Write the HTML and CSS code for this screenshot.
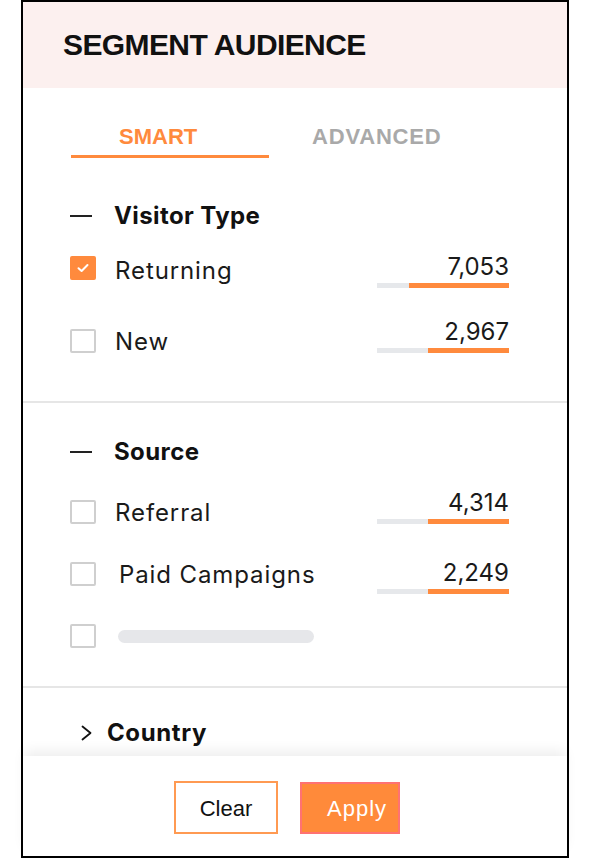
FILE: index.html
```html
<!DOCTYPE html>
<html lang="en">
<head>
<meta charset="utf-8">
<title>Segment Audience</title>
<link rel="stylesheet" href="styles.css">
</head>
<body>
<div class="panel">
  <div class="header"><h1 class="title">SEGMENT AUDIENCE</h1></div>

  <div class="tabs">
    <div class="tab active">SMART</div>
    <div class="tab plain">ADVANCED</div>
  </div>

  <section class="group group-visitor">
    <div class="group-head"><span class="dash"></span><span>Visitor Type</span></div>
    <div class="row">
      <span class="cb checked"><svg width="14" height="12" viewBox="0 0 14 12"><polyline points="2.5,6.2 5.6,9 11.5,3" fill="none" stroke="#fff" stroke-width="2" stroke-linecap="round" stroke-linejoin="round"/></svg></span>
      <span class="label label-low">Returning</span>
      <div class="stat"><div class="num">7,053</div><div class="bar"><span class="fill" style="width:76%"></span></div></div>
    </div>
    <div class="row">
      <span class="cb"></span>
      <span class="label">New</span>
      <div class="stat up"><div class="num">2,967</div><div class="bar"><span class="fill" style="width:61%"></span></div></div>
    </div>
  </section>

  <section class="group group-source">
    <div class="group-head"><span class="dash"></span><span>Source</span></div>
    <div class="row">
      <span class="cb"></span>
      <span class="label">Referral</span>
      <div class="stat up"><div class="num">4,314</div><div class="bar"><span class="fill" style="width:61%"></span></div></div>
    </div>
    <div class="row">
      <span class="cb"></span>
      <span class="label label-wide">Paid Campaigns</span>
      <div class="stat"><div class="num">2,249</div><div class="bar"><span class="fill" style="width:61%"></span></div></div>
    </div>
    <div class="row row-center">
      <span class="cb"></span>
      <span class="skeleton"></span>
    </div>
  </section>

  <div class="collapsed">
    <svg class="chev" width="13" height="16" viewBox="0 0 13 16"><polyline points="2.5,1.5 10.5,8 2.5,14.5" fill="none" stroke="#111" stroke-width="1.8" stroke-linecap="round" stroke-linejoin="round"/></svg>
    <span>Country</span>
  </div>

  <footer class="footer">
    <button class="btn btn-clear">Clear</button>
    <button class="btn btn-apply">Apply</button>
  </footer>
</div>
</body>
</html>
```

FILE: styles.css
```css
* { box-sizing: border-box; }

body {
  margin: 0;
  background: #fff;
  font-family: Inter, "Noto Sans", sans-serif;
  color: #1a1a1a;
}

.panel {
  margin-left: 21px;
  width: 548px;
  height: 858px;
  border: 2px solid #000;
  display: flex;
  flex-direction: column;
  background: #fff;
}

.header {
  height: 86px;
  flex: none;
  background: #fcf0ef;
  display: flex;
  align-items: center;
  padding-left: 40px;
}

.title {
  margin: 0;
  font: 700 30px/30px "Liberation Sans", Arial, sans-serif;
  letter-spacing: -0.6px;
  color: #111;
}

.tabs {
  display: flex;
  padding-left: 48px;
  flex: none;
}

.tab {
  font: 700 22px/22px "Liberation Sans", Arial, sans-serif;
  padding-top: 38px;
  padding-bottom: 7px;
  border-bottom: 3px solid transparent;
}

.tab.active {
  width: 198px;
  padding-left: 48px;
  color: #ff8a3d;
  border-bottom-color: #ff8a3d;
}

.tab.plain {
  margin-left: 43px;
  color: #a9a9a9;
  letter-spacing: 0.8px;
}

.group {
  flex: none;
  padding-left: 47px;
  padding-right: 58px;
  border-bottom: 2px solid #e6e6e6;
}

.group-visitor { padding-top: 46px; padding-bottom: 48px; }
.group-source { padding-top: 37px; padding-bottom: 38px; }

.group-head {
  display: flex;
  align-items: center;
  font: 700 24px/24px Inter, sans-serif;
  letter-spacing: 0.4px;
  color: #111;
}

.dash {
  width: 22px;
  height: 2px;
  background: #222;
  margin-right: 22px;
  margin-top: -1px;
}

.row {
  display: flex;
  align-items: flex-start;
  height: 24px;
}

.group-visitor .group-head + .row { margin-top: 28px; }
.group-visitor .row + .row { margin-top: 49px; }
.group-source .group-head + .row { margin-top: 36px; }
.group-source .row + .row { margin-top: 38px; }

.row-center { align-items: center; }

.cb {
  flex: none;
  width: 26px;
  height: 24px;
  border: 2px solid #cfcfcf;
  border-radius: 2px;
  background: #fff;
  display: flex;
  align-items: center;
  justify-content: center;
}

.cb.checked {
  background: #ff8a3d;
  border-color: #ff8a3d;
}

.label {
  margin-left: 19px;
  margin-top: 1px;
  font: 400 24px/24px Inter, sans-serif;
  letter-spacing: 0.9px;
  color: #1a1a1a;
}

.label-low { margin-top: 3px; }
.label-wide { margin-left: 23px; }

.skeleton {
  margin-left: 22px;
  width: 196px;
  height: 13px;
  border-radius: 7px;
  background: #e6e7ea;
}

.stat {
  margin-left: auto;
  margin-top: -1px;
  width: 134px;
  display: flex;
  flex-direction: column;
  align-items: flex-end;
}

.stat.up { margin-top: -9px; }

.num {
  font: 400 24px/24px Inter, sans-serif;
  color: #1a1a1a;
}

.bar {
  margin-top: 4px;
  width: 132px;
  height: 5px;
  background: #e6e8eb;
  display: flex;
  justify-content: flex-end;
}

.fill {
  height: 100%;
  background: #ff8a3d;
}

.collapsed {
  flex: none;
  display: flex;
  align-items: center;
  margin-top: 33px;
  padding-left: 57px;
  font: 700 24px/24px Inter, sans-serif;
  letter-spacing: 0.6px;
  color: #111;
}

.chev { margin-right: 14px; }

.footer {
  margin-top: auto;
  flex: none;
  height: 100px;
  display: flex;
  align-items: flex-start;
  padding-top: 25px;
  padding-left: 151px;
  background: #fff;
  box-shadow: 0 -7px 12px -2px rgba(0, 0, 0, 0.07);
}

.btn {
  height: 53px;
  font: 400 22px/1 "Liberation Sans", Arial, sans-serif;
  cursor: pointer;
  border-radius: 0;
  padding-top: 3px;
}

.btn-clear {
  width: 104px;
  border: 2px solid #ff9a52;
  background: #fff;
  color: #111;
}

.btn-apply {
  width: 100px;
  margin-left: 22px;
  margin-top: 1px;
  height: 52px;
  border: 2px solid #ff7272;
  background: #ff8a3a;
  color: #fff;
  text-align: left;
  padding-left: 25px;
  letter-spacing: 1px;
}
```
